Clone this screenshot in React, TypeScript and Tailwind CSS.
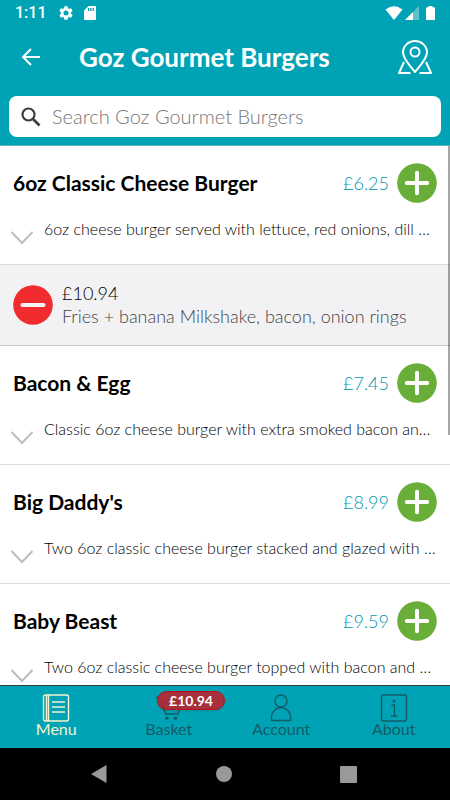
import React from 'react';

interface MenuItem {
  name: string;
  price: string;
  description: string;
  extra?: { price: string; details: string };
}

const menuItems: MenuItem[] = [
  {
    name: '6oz Classic Cheese Burger',
    price: '£6.25',
    description: '6oz cheese burger served with lettuce, red onions, dill …',
    extra: {
      price: '£10.94',
      details: 'Fries + banana Milkshake, bacon, onion rings',
    },
  },
  {
    name: 'Bacon & Egg',
    price: '£7.45',
    description: 'Classic 6oz cheese burger with extra smoked bacon an…',
  },
  {
    name: "Big Daddy's",
    price: '£8.99',
    description: 'Two 6oz classic cheese burger stacked and glazed with …',
  },
  {
    name: 'Baby Beast',
    price: '£9.59',
    description: 'Two 6oz classic cheese burger topped with bacon and …',
  },
];

const StatusBar: React.FC = () => (
  <div className="flex h-[26px] shrink-0 items-center px-[15px] text-white">
    <span className="w-11 font-[Roboto,sans-serif] text-base font-medium">1:11</span>
    {/* Settings */}
    <svg viewBox="2 2 20 20" className="h-[14px] w-[14px]" fill="currentColor">
      <path d="M19.14 12.94c.04-.3.06-.61.06-.94s-.02-.64-.07-.94l2.03-1.58a.5.5 0 0 0 .12-.61l-1.92-3.32a.5.5 0 0 0-.59-.22l-2.39.96a7 7 0 0 0-1.62-.94l-.36-2.54a.5.5 0 0 0-.48-.41h-3.84a.5.5 0 0 0-.47.41l-.36 2.54a7 7 0 0 0-1.62.94l-2.39-.96a.5.5 0 0 0-.59.22L2.74 8.87a.5.5 0 0 0 .12.61l2.03 1.58a7 7 0 0 0 0 1.88l-2.03 1.58a.5.5 0 0 0-.12.61l1.92 3.32c.12.22.37.29.59.22l2.39-.96c.5.38 1.03.7 1.62.94l.36 2.54c.05.24.24.41.48.41h3.84c.24 0 .44-.17.47-.41l.36-2.54a7 7 0 0 0 1.62-.94l2.39.96c.22.08.47 0 .59-.22l1.92-3.32a.5.5 0 0 0-.12-.61zM12 15.6a3.6 3.6 0 1 1 0-7.2 3.6 3.6 0 0 1 0 7.2z" />
    </svg>
    {/* SD card */}
    <svg viewBox="0 0 12 14" className="ml-[11px] h-[14px] w-3" fill="currentColor">
      <path
        fillRule="evenodd"
        d="M4.5 0H11a1 1 0 0 1 1 1v12a1 1 0 0 1-1 1H1a1 1 0 0 1-1-1V4.5zM4 2v3h1.3V2zM6.3 2v3h1.3V2zM8.6 2v3h1.3V2z"
      />
    </svg>
    <div className="ml-auto flex items-center">
      <svg viewBox="0 0 18 14" className="h-[14px] w-[18px]" fill="currentColor">
        <path d="M0.5 3.5Q9-3 17.5 3.5L9 14z" />
      </svg>
      <svg viewBox="0 0 14 14" className="ml-[2px] h-[14px] w-[14px]" fill="currentColor">
        <path d="M14 0V14H0z" opacity="0.35" />
        <path d="M8 6V14H0z" />
      </svg>
      <svg viewBox="0 0 9 14" className="ml-[7px] h-[14px] w-[9px]" fill="currentColor">
        <path d="M2.5 0h4v1.3H8q1 0 1 1V13q0 1-1 1H1q-1 0-1-1V2.3q0-1 1-1h1.5z" />
      </svg>
    </div>
  </div>
);

const Header: React.FC = () => (
  <header className="shrink-0 border-b border-[#5fb5c0] bg-[#00a3b5]">
    <StatusBar />
    <div className="flex h-[62px] items-center pl-5 pr-[17px] text-white">
      <button type="button" aria-label="Back" className="w-[59px]">
        <svg viewBox="0 0 20 20" className="h-5 w-5" fill="none" stroke="currentColor" strokeWidth="2">
          <path d="M20 10H3.5M11 2L3 10L11 18" />
        </svg>
      </button>
      <h1 className="text-[26px] font-bold">Goz Gourmet Burgers</h1>
      <button type="button" aria-label="Find us" className="ml-auto">
        <svg
          viewBox="0 0 36 36"
          className="h-9 w-9"
          fill="none"
          stroke="currentColor"
          strokeWidth="2"
          strokeLinejoin="round"
        >
          <path d="M18 33C12.500 26.500 6 19.500 6 13.500a12 11.500 0 0 1 24 0C30 19.500 23.500 26.500 18 33z" />
          <circle cx="18" cy="13" r="4.500" />
          <path d="M7 23L2 34H13.500M29 23L34 34H22.500" />
        </svg>
      </button>
    </div>
    <div className="px-[9px] py-2">
      <label className="flex h-[41px] items-center rounded-lg bg-white pl-3">
        <svg viewBox="0 0 20 20" className="h-5 w-5 shrink-0" fill="none" stroke="#3c3c3c" strokeWidth="2.200">
          <circle cx="7.500" cy="7.500" r="6" />
          <path d="M12 12L18.500 18.500" strokeWidth="2.600" />
        </svg>
        <input
          type="search"
          aria-label="Search Goz Gourmet Burgers"
          placeholder="Search Goz Gourmet Burgers"
          className="ml-[11px] min-w-0 flex-1 bg-transparent pb-[2px] text-xl font-light text-gray-700 outline-none placeholder:text-[#777]"
        />
      </label>
    </div>
  </header>
);

const ExtraRow: React.FC<{ price: string; details: string }> = ({ price, details }) => (
  <div className="flex h-[81px] items-center border-b border-[#c8c8cc] bg-[#f2f2f5] pl-[13px]">
    <button type="button" aria-label="Remove from basket" className="shrink-0">
      <svg viewBox="0 0 40 40" className="h-10 w-10">
        <circle cx="20" cy="20" r="19.800" fill="#f12c2f" />
        <path d="M9.500 20H30.500" stroke="#f2f2f5" strokeWidth="4" strokeLinecap="round" />
      </svg>
    </button>
    <div className="ml-[9px] whitespace-nowrap text-lg leading-[23px] font-light">
      <p className="text-black">{price}</p>
      <p className="text-[#444]">{details}</p>
    </div>
  </div>
);

const MenuRow: React.FC<{ item: MenuItem }> = ({ item }) => (
  <li>
    <div className="h-[119px] border-b border-[#dcdcdc] px-[13px] pt-[17px]">
      <div className="flex h-10 items-center">
        <h2 className="text-[21px] font-bold text-black">{item.name}</h2>
        <span className="ml-auto mr-2 text-lg font-light text-[#0098ad]">{item.price}</span>
        <button type="button" aria-label={`Add ${item.name}`}>
          <svg viewBox="0 0 40 40" className="h-10 w-10">
            <circle cx="20" cy="20" r="19.800" fill="#69ae38" />
            <path d="M9.800 20H30.200M20 9.800V30.200" stroke="white" strokeWidth="4" strokeLinecap="round" />
          </svg>
        </button>
      </div>
      <div className="mt-4 flex">
        <button type="button" aria-label={`More about ${item.name}`} className="mt-3 shrink-0">
          <svg viewBox="0 0 22 14" className="-ml-[2px] h-[14px] w-[22px]" fill="none" stroke="#bdbdbd" strokeWidth="2">
            <path d="M0.500 1L11 12L21.500 1" />
          </svg>
        </button>
        <p className="ml-[11px] whitespace-nowrap text-base leading-5 font-light text-black">{item.description}</p>
      </div>
    </div>
    {item.extra && <ExtraRow price={item.extra.price} details={item.extra.details} />}
  </li>
);

const TabBar: React.FC = () => (
  <nav className="flex h-[63px] shrink-0 border-t border-[#2b3a3c] bg-[#00a3b5] pt-2 text-base leading-[14px] text-[#135c65]">
    <a href="#menu" aria-current="page" className="flex flex-1 flex-col items-center text-[#f3f3cf]">
      <svg viewBox="0 0 28 28" className="h-7 w-7" fill="none" stroke="currentColor" strokeWidth="1.400">
        <rect x="1.500" y="1" width="25" height="26" rx="2" />
        <path d="M4.500 1V27M6.500 1V27M10 8H23M10 13H23M10 18H23" />
      </svg>
      <span>Menu</span>
    </a>
    <a href="#basket" className="relative flex flex-1 flex-col items-center">
      <svg viewBox="0 0 28 28" className="h-7 w-7" fill="none" stroke="currentColor" strokeWidth="1.500">
        <path d="M1 3.500H5.500L10.500 20H23L26 8H7" />
        <circle cx="12" cy="24.300" r="1" fill="currentColor" />
        <circle cx="20.500" cy="24.300" r="1" fill="currentColor" />
      </svg>
      <span>Basket</span>
      <span className="absolute -top-[3px] right-0 flex h-[19px] w-[68px] items-center justify-center rounded-full border border-[#b5121b] bg-[#b8242d]/90 text-sm font-bold text-white shadow">
        £10.94
      </span>
    </a>
    <a href="#account" className="flex flex-1 flex-col items-center">
      <svg viewBox="0 0 28 28" className="h-7 w-7" fill="none" stroke="currentColor" strokeWidth="1.400">
        <circle cx="14" cy="7" r="6" />
        <path d="M4.500 26.500V23a9.500 9.500 0 0 1 19 0V26.500z" />
      </svg>
      <span>Account</span>
    </a>
    <a href="#about" className="flex flex-1 flex-col items-center">
      <svg viewBox="0 0 28 28" className="h-7 w-7" fill="none" stroke="currentColor" strokeWidth="1.400">
        <rect x="1.500" y="1" width="25" height="26" rx="2" />
        <path d="M11.500 11H14.500V22M11 22H17.500" strokeWidth="1.300" />
        <circle cx="14" cy="7" r="0.800" fill="currentColor" />
      </svg>
      <span>About</span>
    </a>
  </nav>
);

// Android navigation buttons
const SystemBar: React.FC = () => (
  <div className="flex h-[52px] shrink-0 items-center justify-center gap-[108px] bg-black pr-[3px] text-[#999]">
    <button type="button" aria-label="System back">
      <svg viewBox="0 0 18 18" className="h-[18px] w-[18px]" fill="currentColor">
        <path d="M16.500 0V18L1 9z" />
      </svg>
    </button>
    <button type="button" aria-label="Home">
      <svg viewBox="0 0 16 16" className="h-4 w-4" fill="currentColor">
        <circle cx="8" cy="8" r="8" />
      </svg>
    </button>
    <button type="button" aria-label="Recent apps">
      <svg viewBox="0 0 17 17" className="h-[17px] w-[17px]" fill="currentColor">
        <rect width="17" height="17" rx="1" />
      </svg>
    </button>
  </div>
);

export default function App() {
  return (
    <div className="flex h-screen flex-col overflow-hidden bg-white font-[Lato,sans-serif]">
      <Header />
      <main className="relative min-h-0 flex-1 overflow-hidden">
        <ul>
          {menuItems.map((item) => (
            <MenuRow key={item.name} item={item} />
          ))}
        </ul>
        {/* Scroll indicator */}
        <div className="absolute top-0 right-0 h-[289px] w-[2px] bg-black/35" />
      </main>
      <TabBar />
      <SystemBar />
    </div>
  );
}
